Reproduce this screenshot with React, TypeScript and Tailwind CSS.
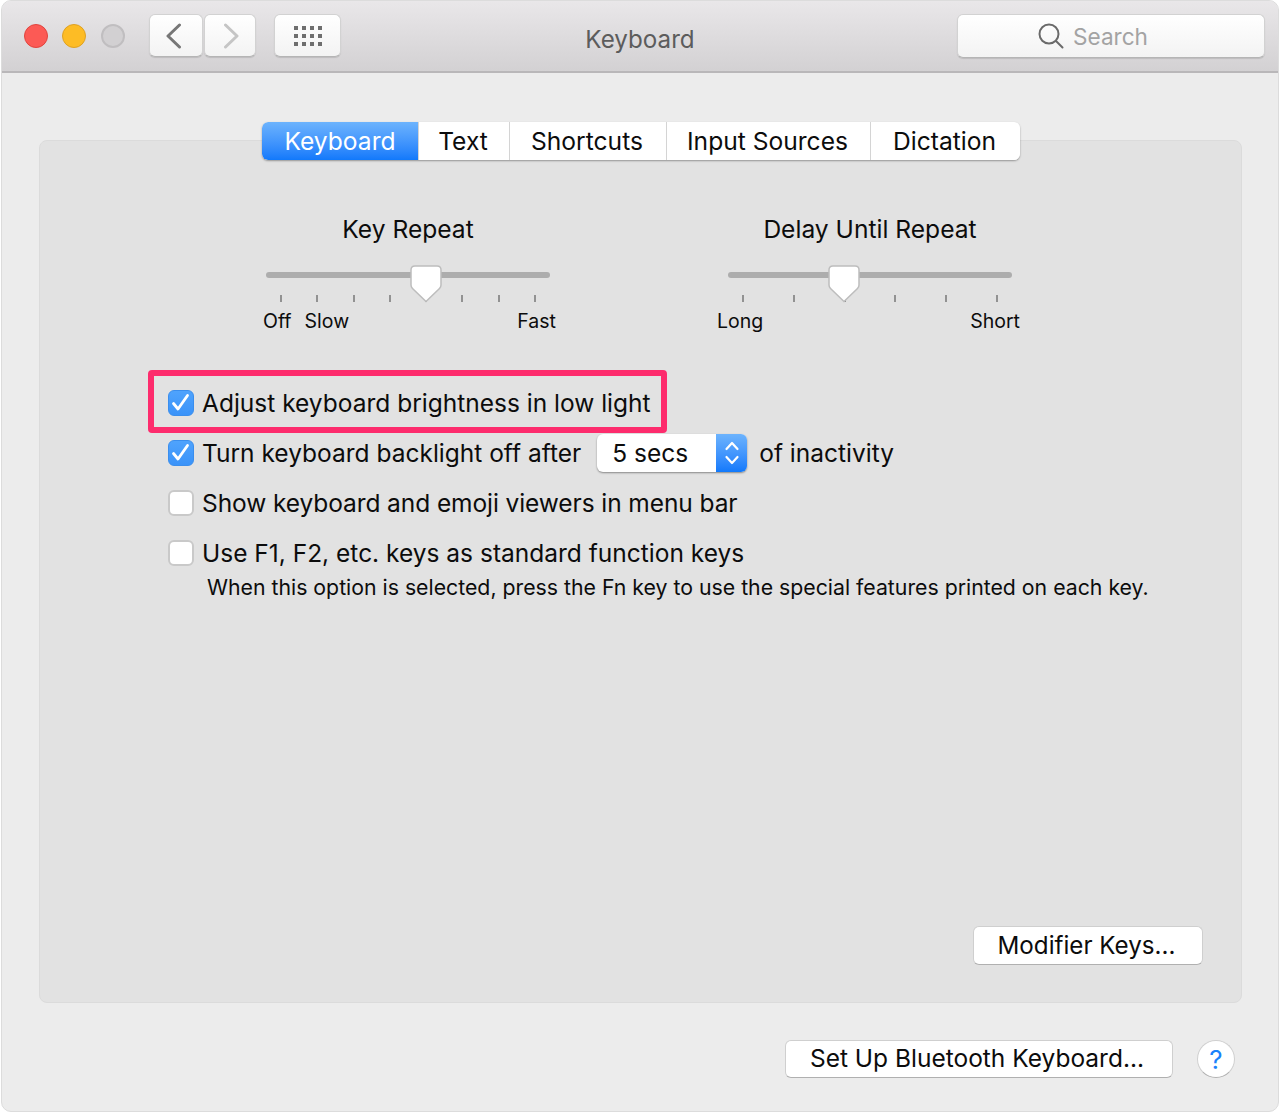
const font = { fontFamily: 'Inter, "Liberation Sans", sans-serif' };

const btn =
  'bg-gradient-to-b from-white to-[#f3f3f3] border border-[#d2d2d2] border-b-[#b5b5b5] rounded-[6px] shadow-[0_1px_1px_rgba(0,0,0,0.12)]';

function Thumb({ left }: { left: string }) {
  return (
    <svg className={`absolute top-0 ${left}`} width="32" height="38" viewBox="0 0 32 38">
      <path
        d="M5 1 H27 Q31 1 31 5 V20 Q31 22 29.5 23.5 L16 36.5 L2.5 23.5 Q1 22 1 20 V5 Q1 1 5 1 Z"
        fill="#ffffff"
        stroke="#bdbdbd"
        strokeWidth="1.5"
      />
    </svg>
  );
}

function Slider({
  title,
  ticks,
  thumb,
  labels,
}: {
  title: string;
  ticks: number;
  thumb: string;
  labels: React.ReactNode;
}) {
  return (
    <div className="w-[284px]">
      <div className="-mx-[20px] h-[30px] leading-[30px] text-[24.6px] text-center whitespace-nowrap">{title}</div>
      <div className="relative mt-[21px]">
        <div className="pt-[7px]">
          <div className="h-[6px] rounded-full bg-[#adadad]" />
        </div>
        <div className="flex justify-between px-[14px] mt-[17px]">
          {Array.from({ length: ticks }).map((_, i) => (
            <div key={i} className="w-[2px] h-[7px] bg-[#929292]" />
          ))}
        </div>
        <Thumb left={thumb} />
      </div>
      {labels}
    </div>
  );
}

function Checkbox({ checked }: { checked?: boolean }) {
  if (checked) {
    return (
      <div className="w-[26px] h-[26px] shrink-0 rounded-[6px] bg-gradient-to-b from-[#4fa3fd] to-[#3a93f9] border border-[#3a8eee]">
        <svg width="24" height="24" viewBox="0 0 24 24" fill="none">
          <path d="M4.5 12.5 L9 18 L18.5 4.5" stroke="#fff" strokeWidth="2.8" strokeLinecap="round" strokeLinejoin="round" />
        </svg>
      </div>
    );
  }
  return <div className="w-[26px] h-[26px] shrink-0 rounded-[6px] bg-white border-2 border-[#c9c9c9]" />;
}

function Tab({ label, width, active }: { label: string; width: string; active?: boolean }) {
  return (
    <div
      className={`${width} flex items-center justify-center ${
        active
          ? 'bg-gradient-to-b from-[#6cb3fd] to-[#1079fb] text-white rounded-l-[6px]'
          : 'bg-white border-l border-[#d4d4d4] pr-[2px]'
      }`}
    >
      {label}
    </div>
  );
}

export default function App() {
  return (
    <div className="w-[1280px] h-[1114px] bg-white px-[1px] pb-[2px] text-[#0c0c0c]" style={font}>
      <div className="h-full border border-[#dcdcdc] rounded-[10px] overflow-hidden bg-[#ececec] flex flex-col">
        {/* title bar */}
        <div className="relative h-[72px] shrink-0 flex items-center pl-[22px] pr-[13px] pb-[1px] bg-gradient-to-b from-[#e9e7e9] to-[#d3d1d3] border-b-2 border-[#b9b7b9]">
          <div className="w-[24px] h-[24px] rounded-full bg-[#fc5a55] border border-[#e0443e]" />
          <div className="w-[24px] h-[24px] rounded-full bg-[#fdbc25] border border-[#dea123] ml-[14px]" />
          <div className="w-[24px] h-[24px] rounded-full bg-[#d2d0d2] border-2 border-[#c0bec0] ml-[15px]" />
          <div className={`${btn} w-[54px] h-[43px] ml-[24px] flex items-center justify-center pr-[5px]`}>
            <svg width="16" height="26" viewBox="0 0 16 26" fill="none">
              <path d="M13.5 2 L2 13 L13.5 24" stroke="#777" strokeWidth="3" strokeLinecap="round" strokeLinejoin="round" />
            </svg>
          </div>
          <div className={`${btn} w-[52px] h-[43px] ml-[1px] flex items-center justify-center pl-[2px]`}>
            <svg width="16" height="26" viewBox="0 0 16 26" fill="none">
              <path d="M2.5 2 L14 13 L2.5 24" stroke="#c5c5c5" strokeWidth="3" strokeLinecap="round" strokeLinejoin="round" />
            </svg>
          </div>
          <div className={`${btn} w-[67px] h-[43px] ml-[18px] flex items-center justify-center`}>
            <svg width="28" height="20" viewBox="0 0 28 20" fill="#6e6e6e">
              {[0, 8, 16].map((y) =>
                [0, 8, 16, 24].map((x) => <rect key={`${x}-${y}`} x={x} y={y} width="4" height="4" />),
              )}
            </svg>
          </div>
          <div className="absolute left-0 right-0 text-center text-[24.2px] text-[#5c5c5c] pointer-events-none top-[24px] leading-[30px]">
            Keyboard
          </div>
          <div className={`${btn} ml-auto w-[308px] h-[44px] flex items-center pl-[80px] gap-[9px] text-[22.6px] text-[#a3a3a3]`}>
            <svg width="26" height="26" viewBox="0 0 26 26" fill="none" stroke="#6a6a6a" strokeWidth="2">
              <circle cx="11" cy="11" r="9.5" />
              <path d="M18 18 L24.5 24.5" strokeLinecap="round" />
            </svg>
            <span className="pt-[3px]">Search</span>
          </div>
        </div>

        {/* panel */}
        <div className="ml-[37px] mr-[36px] mt-[67px] h-[863px] shrink-0 bg-[#e2e2e2] border border-[#dbdbdb] rounded-[8px] flex flex-col">
          <div className="flex h-[38px] w-fit ml-[222px] -mt-[19px] rounded-[6px] overflow-hidden text-[24.6px] shadow-[0_1px_2px_rgba(0,0,0,0.35)]">
            <Tab label="Keyboard" width="w-[156px]" active />
            <Tab label="Text" width="w-[91px]" />
            <Tab label="Shortcuts" width="w-[157px]" />
            <Tab label="Input Sources" width="w-[204px]" />
            <Tab label="Dictation" width="w-[150px]" />
          </div>

          <div className="flex gap-[178px] pl-[226px] mt-[54px]">
            <Slider
              title="Key Repeat"
              ticks={8}
              thumb="left-[144px]"
              labels={
                <div className="flex justify-between -ml-[3px] -mr-[6px] mt-[7px] h-[24px] leading-[24px] text-[19.5px]">
                  <div className="flex gap-[13px]">
                    <span>Off</span>
                    <span>Slow</span>
                  </div>
                  <span>Fast</span>
                </div>
              }
            />
            <Slider
              title="Delay Until Repeat"
              ticks={6}
              thumb="left-[100px]"
              labels={
                <div className="flex justify-between -ml-[11px] -mr-[8px] mt-[7px] h-[24px] leading-[24px] text-[19.5px]">
                  <span>Long</span>
                  <span>Short</span>
                </div>
              }
            />
          </div>

          <div className="mt-[45px] pl-[128px] text-[24.5px]">
            <div className="relative h-[50px] flex items-center gap-[8px]">
              <div className="absolute -left-[20px] top-[-8px] w-[519px] h-[63px] border-[6px] border-[#fd2c6d] rounded-[4px]" />
              <Checkbox checked />
              <span>Adjust keyboard brightness in low light</span>
            </div>
            <div className="h-[50px] flex items-center gap-[8px]">
              <Checkbox checked />
              <span>Turn keyboard backlight off after</span>
              <div className="ml-[8px] w-[150px] h-[38px] flex rounded-[6px] overflow-hidden bg-white shadow-[0_1px_2px_rgba(0,0,0,0.4)]">
                <div className="flex-1 pl-[15px] leading-[38px]">5 secs</div>
                <div className="w-[31px] bg-gradient-to-b from-[#6cb3fd] to-[#1079fb] flex items-center justify-center">
                  <svg width="16" height="28" viewBox="0 0 16 28" fill="none" stroke="#fff" strokeWidth="2.2" strokeLinecap="round" strokeLinejoin="round">
                    <path d="M2.5 10 L8 4 L13.5 10" />
                    <path d="M2.5 18 L8 24 L13.5 18" />
                  </svg>
                </div>
              </div>
              <span className="ml-[4px]">of inactivity</span>
            </div>
            <div className="h-[50px] flex items-center gap-[8px]">
              <Checkbox />
              <span className="tracking-[-0.09px]">Show keyboard and emoji viewers in menu bar</span>
            </div>
            <div className="h-[50px] flex items-center gap-[8px]">
              <Checkbox />
              <span>Use F1, F2, etc. keys as standard function keys</span>
            </div>
            <div className="pl-[39px] h-[18px] leading-[18px] text-[21.28px] whitespace-nowrap">
              When this option is selected, press the Fn key to use the special features printed on each key.
            </div>
          </div>

          <div className="mt-auto self-end mr-[38px] mb-[37px] w-[230px] h-[39px] pr-[3px] leading-[37px] text-center text-[24.2px] bg-white border border-[#cfcfcf] border-b-[#b0b0b0] rounded-[6px]">
            Modifier Keys...
          </div>
        </div>

        {/* footer */}
        <div className="flex justify-end items-start mt-[37px] pr-[43px] gap-[24px]">
          <div className="w-[388px] h-[38px] pr-[4px] leading-[35px] text-center text-[24.5px] bg-white border border-[#cfcfcf] border-b-[#b0b0b0] rounded-[6px]">
            Set Up Bluetooth Keyboard...
          </div>
          <div className="w-[38px] h-[38px] rounded-full bg-white border border-[#cfcfcf] border-b-[#b0b0b0] flex items-center justify-center text-[26px] text-[#1a82fb]">
            ?
          </div>
        </div>
      </div>
    </div>
  );
}
